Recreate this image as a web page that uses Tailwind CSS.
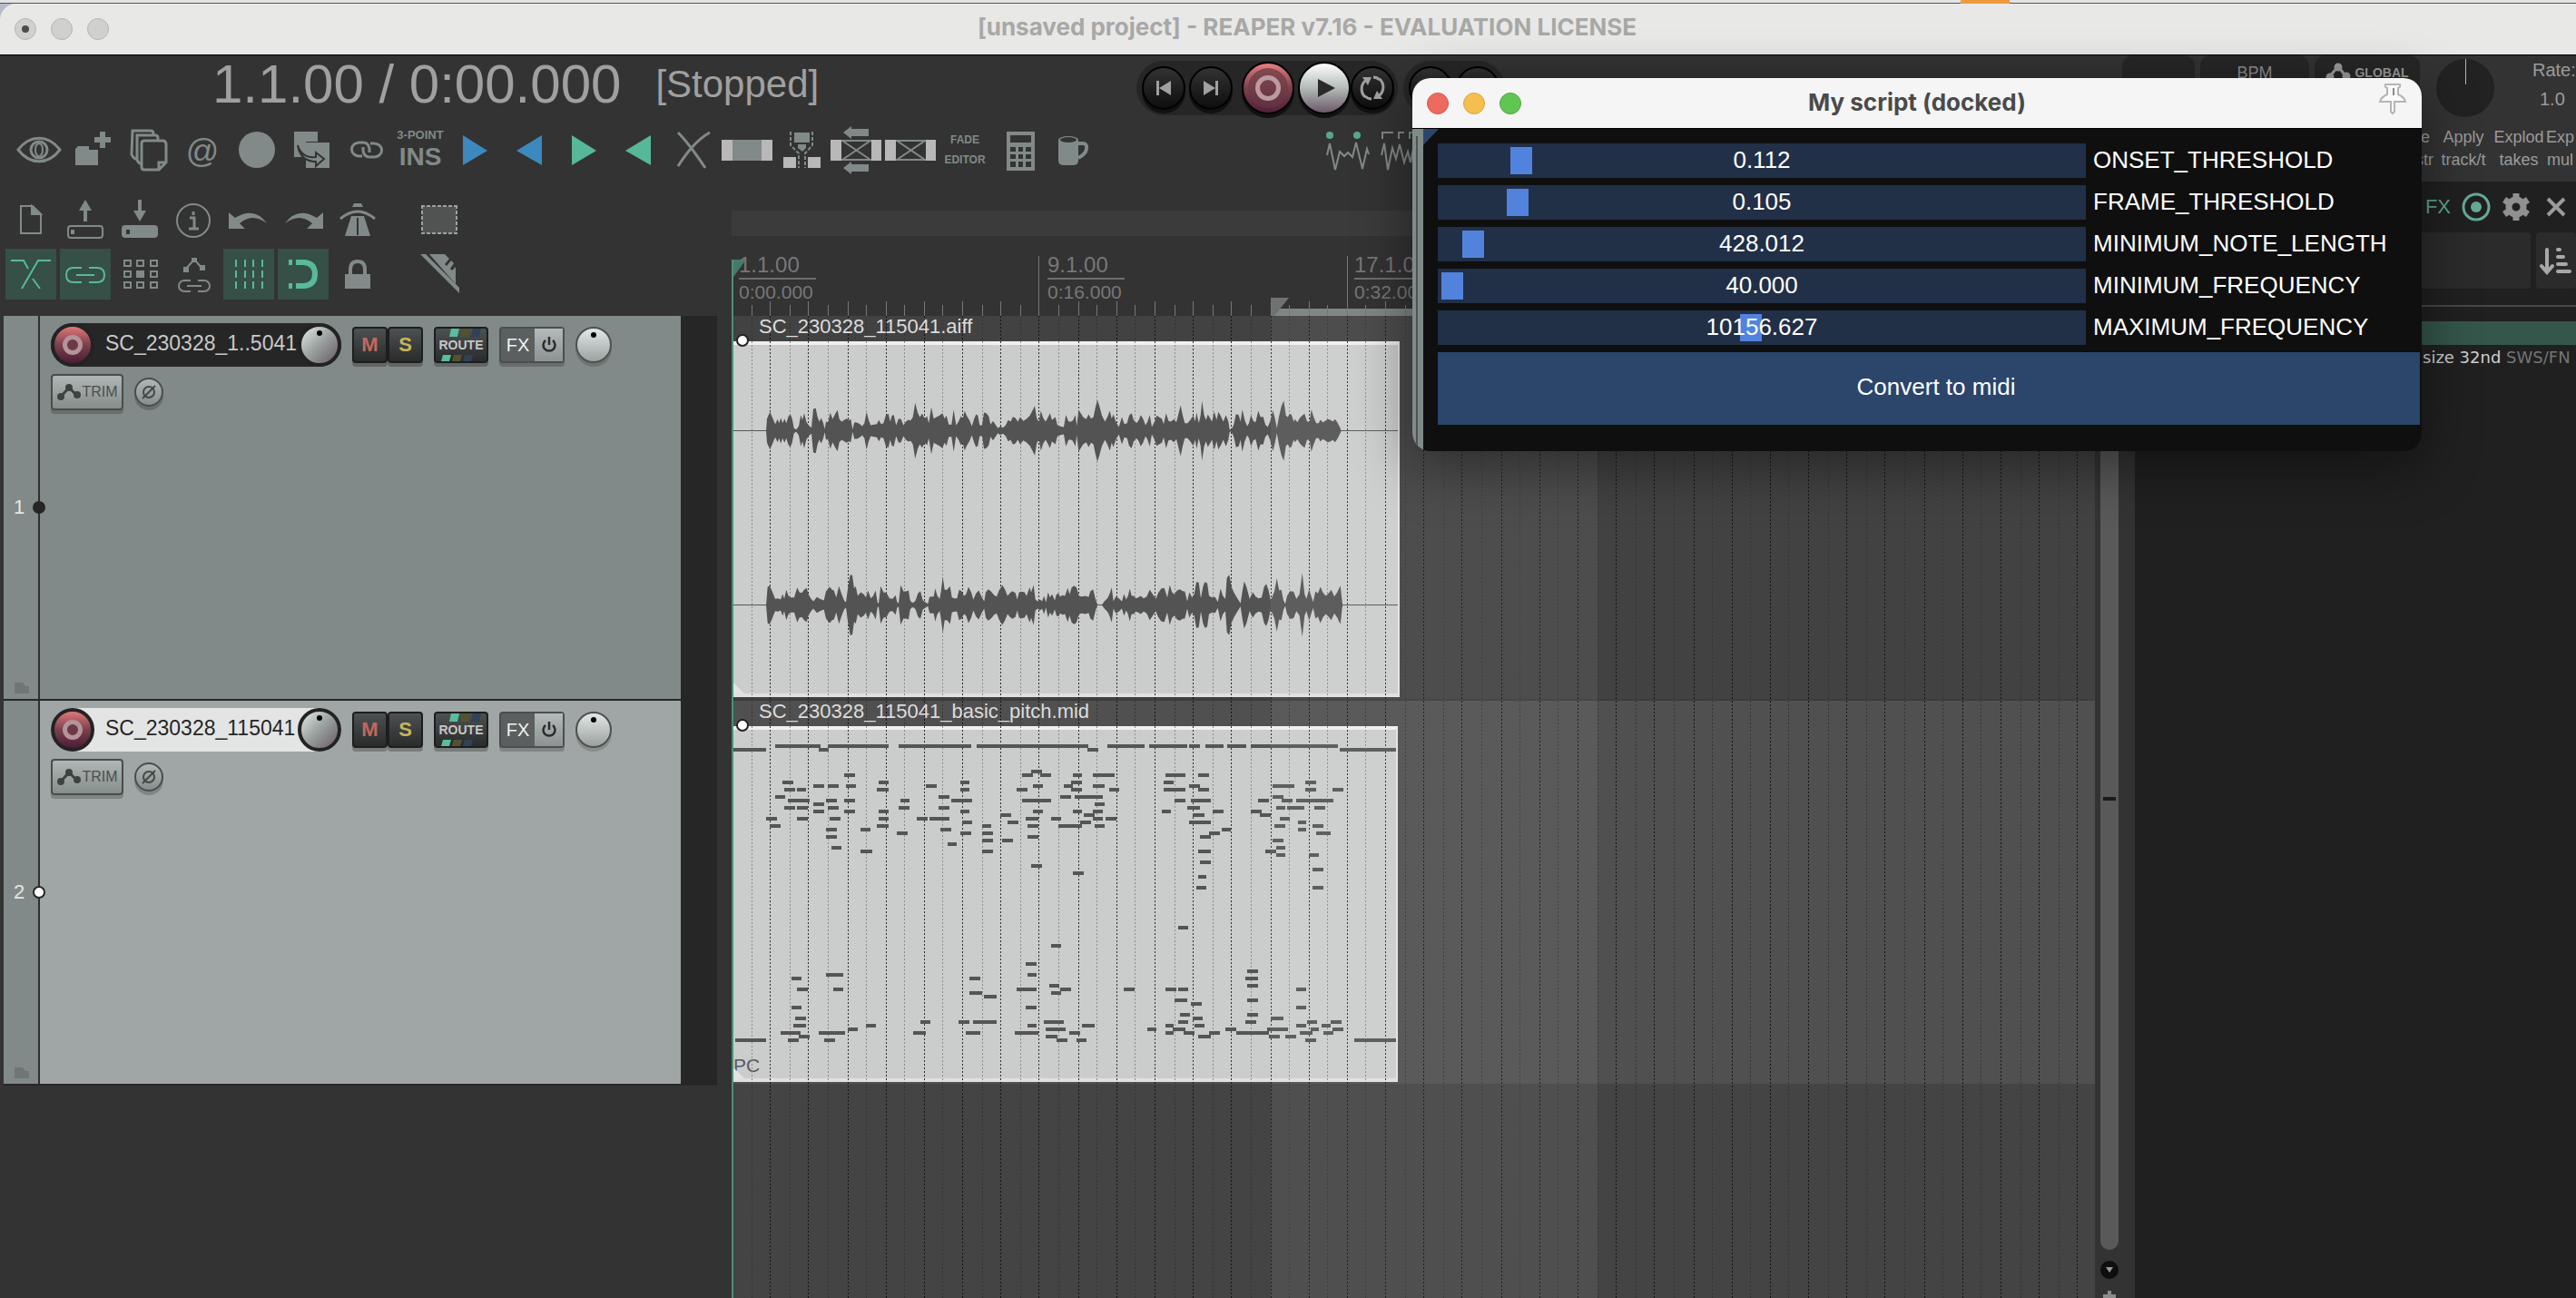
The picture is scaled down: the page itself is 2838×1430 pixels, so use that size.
<!DOCTYPE html>
<html lang="en">
<head>
<meta charset="utf-8">
<title>[unsaved project] - REAPER v7.16 - EVALUATION LICENSE</title>
<script src="https://cdn.jsdelivr.net/npm/@tailwindcss/browser@4"></script>
</head>
<body class="relative flex min-h-screen flex-col overflow-hidden bg-[#333333] font-['Liberation_Sans',sans-serif] text-[#9b9b9b]">

<!-- desktop strip and title bar -->
<div class="flex h-1 justify-end border-b border-[#55565a] bg-[#e3e4e5] pr-[624px]"><div class="h-1 w-[54px] bg-[#ee9a3c]"></div></div>
<header class="bg-[#b4bcc8]">
  <div class="relative flex h-[57px] items-center justify-center rounded-tl-[18px] border-b border-black bg-[#e8e8e6]">
    <div class="absolute left-4 flex gap-4">
      <button aria-label="Close" class="flex size-6 items-center justify-center rounded-full border border-[#b5b5b3] bg-[#d0d0ce]"><span class="size-2 rounded-full bg-[#4c4c4c]"></span></button>
      <button aria-label="Minimise" class="size-6 rounded-full border border-[#b5b5b3] bg-[#d0d0ce]"></button>
      <button aria-label="Zoom" class="size-6 rounded-full border border-[#b5b5b3] bg-[#d0d0ce]"></button>
    </div>
    <h1 class="pb-1 pl-[42px] font-['Inter',sans-serif] text-[26px] font-bold leading-8 text-[#a8a8a6]">[unsaved project] - REAPER v7.16 - EVALUATION LICENSE</h1>
  </div>
</header>

<!-- transport -->
<section class="flex h-[72px] shrink-0 items-center overflow-hidden" aria-label="Transport">
  <div class="flex w-[1252px] shrink-0 items-center pb-2 pl-[234px] text-[#a0a0a0]">
    <span class="text-[60px] leading-[60px]">1.1.00 / 0:00.000</span>
    <span class="ml-[38px] text-[42px] leading-[60px]">[Stopped]</span>
  </div>
  <div class="flex h-[60px] shrink-0 items-center gap-1 rounded-full bg-[#262626] pl-1.5 pr-1">
    <button aria-label="Go to start" class="flex size-12 items-center justify-center rounded-full border-2 border-black bg-linear-to-b from-[#333333] to-[#0e0e0e] shadow-[0_4px_0_#111111]"><svg class="size-6" viewBox="0 0 24 24" fill="#a0a0a0"><path d="M4 4h3v16H4zM20 4v16L7 12z"/></svg></button>
    <button aria-label="Go to end" class="flex size-12 items-center justify-center rounded-full border-2 border-black bg-linear-to-b from-[#333333] to-[#0e0e0e] shadow-[0_4px_0_#111111]"><svg class="size-6" viewBox="0 0 24 24" fill="#a0a0a0"><path d="M17 4h3v16h-3zM4 4v16l13-8z"/></svg></button>
    <button aria-label="Record" class="ml-1.5 flex size-[58px] items-center justify-center rounded-full border-2 border-black bg-linear-to-b from-[#e87f80] via-[#7a414c] to-[#541f3c] shadow-[0_4px_0_#111111]"><span class="flex size-11 items-center justify-center rounded-full bg-linear-to-b from-[#84494f] to-[#5f3140]"><span class="size-7 rounded-full border-[5px] border-[#bd9aa0]"></span></span></button>
    <button aria-label="Play" class="flex size-[58px] items-center justify-center rounded-full border-2 border-black bg-linear-to-b from-white via-[#b2bcb9] to-[#6d5a69] shadow-[0_4px_0_#111111]"><svg class="size-8" viewBox="0 0 32 32" fill="#2a2a2a"><path d="M9 6v20l19-10z"/></svg></button>
    <button aria-label="Repeat" class="-ml-1 flex size-12 items-center justify-center rounded-full border-2 border-black bg-linear-to-b from-[#333333] to-[#0e0e0e] shadow-[0_4px_0_#111111]"><svg class="size-8" viewBox="0 0 32 32" fill="none" stroke="#a0a0a0" stroke-width="3"><path d="M11 6C3 10 2 20 8 26M21 26c8-4 9-14 3-20M17 4q4 0 7 3M15 28q-4 0-7-3"/><path d="M5 4l10 0-4 9zM27 28l-10 0 4-9z" fill="#a0a0a0" stroke="none"/></svg></button>
  </div>
  <div class="ml-1.5 flex h-[60px] shrink-0 items-center gap-1 rounded-full bg-[#262626] px-1.5">
    <button aria-label="Pause" class="size-12 rounded-full border-2 border-black bg-linear-to-b from-[#333333] to-[#0e0e0e]"></button>
    <button aria-label="Stop" class="size-12 rounded-full border-2 border-black bg-linear-to-b from-[#333333] to-[#0e0e0e]"></button>
  </div>
  <div class="ml-auto flex h-full shrink-0 items-start">
    <div class="flex gap-1.5">
      <div class="h-[68px] w-20 rounded-xl bg-[#262626]"></div>
      <div class="h-[68px] w-[120px] rounded-xl bg-[#262626] pt-[7px] text-center text-[18px] leading-6 text-[#8b8b8b]">BPM</div>
      <button class="flex h-[68px] w-[116px] items-start justify-center gap-1 rounded-xl bg-[#262626] pt-[7px] text-[#9a9a9a]">
        <svg class="h-6 w-7" viewBox="0 0 28 24" stroke="#9a9a9a" stroke-width="3" fill="#9a9a9a"><path d="M4 17l10-12 9 12" fill="none"/><circle cx="5" cy="17" r="3"/><circle cx="14" cy="6" r="3"/><circle cx="23" cy="16" r="3"/></svg>
        <span class="text-[14px] font-bold leading-6">GLOBAL</span>
      </button>
    </div>
    <div class="ml-[18px] mt-1 flex size-16 justify-center rounded-full bg-[#222222]"><div class="h-7 w-px bg-[#b5b5b5]"></div></div>
    <div class="ml-[42px] w-12 text-[20px] leading-8"><div>Rate:</div><div class="pl-2">1.0</div></div>
  </div>
</section>

<!-- floating toolbar row -->
<section class="flex h-[67px] shrink-0 overflow-hidden pl-[15px] pt-1" aria-label="Main toolbar">
  <div class="flex gap-1 text-[#818a88] [&_button]:flex [&_button]:size-14 [&_button]:shrink-0 [&_button]:flex-col [&_button]:items-center [&_button]:justify-center [&_svg]:size-14 [&_svg]:shrink-0">
    <button aria-label="Show"><svg viewBox="0 0 56 56" fill="none" stroke="currentColor" stroke-width="3"><path d="M5 28C18 11 38 11 51 28C38 45 18 45 5 28z"/><circle cx="28" cy="28" r="9"/><ellipse cx="28" cy="28" rx="4" ry="7" stroke-width="2"/></svg></button>
    <button aria-label="New track"><svg viewBox="0 0 56 56" fill="currentColor"><path d="M11 24h12v4h10v17H8V27zM35 8h6v6h6v6h-6v6h-6v-6h-6v-6h6z"/></svg></button>
    <button aria-label="Duplicate"><svg viewBox="0 0 56 56" fill="#333333" stroke="currentColor" stroke-width="3"><path d="M11 7h20q3 0 3 3v28H14q-3-2-4-5z"/><path d="M16 12h20q3 0 3 3v28H19q-3-2-3-5z"/><path d="M24 18h20q4 0 4 4v20l-8 8H24q-3 0-3-3V21q0-3 3-3zM40 50v-8h8"/></svg></button>
    <button aria-label="At" class="text-[36px] leading-9"><span class="pt-1">@</span></button>
    <button aria-label="Dot"><svg viewBox="0 0 56 56" fill="currentColor"><circle cx="28" cy="28" r="20"/></svg></button>
    <button aria-label="Copy to"><svg viewBox="0 0 56 56" fill="currentColor"><path d="M9 8h26v11H22v17H9z"/><path d="M22 20h26v28H22z"/><path d="M13 23c3 10 10 14 20 13v-5l9 7-9 8v-5c-12 0-18-6-20-18z" stroke="#333333" stroke-width="2"/></svg></button>
    <button aria-label="Chain"><svg viewBox="0 0 56 56" fill="none" stroke="currentColor" stroke-width="3"><path d="M24 35h-3a8 7 0 0 1 0-15h4q6 0 7 7v4"/><path d="M33 21h4a8 7 0 0 1 0 15h-5q-6 0-7-7v-4"/></svg></button>
    <button class="font-bold"><span class="whitespace-nowrap text-[13px] leading-4">3-POINT</span><span class="text-[28px] leading-8">INS</span></button>
    <button aria-label="Next"><svg viewBox="0 0 56 56" fill="#3d88bd"><path d="M15 12v33l27-16z"/></svg></button>
    <button aria-label="Previous"><svg viewBox="0 0 56 56" fill="#3d88bd"><path d="M42 12v33L14 29z"/></svg></button>
    <button aria-label="Next marker"><svg viewBox="0 0 56 56" fill="#56b898"><path d="M15 12v33l27-16z"/></svg></button>
    <button aria-label="Previous marker"><svg viewBox="0 0 56 56" fill="#56b898"><path d="M42 12v33L14 29z"/></svg></button>
    <button aria-label="Crossfade"><svg viewBox="0 0 56 56" fill="none" stroke="currentColor" stroke-width="3"><path d="M12 9q12 12 30 39M47 9Q30 18 12 46"/></svg></button>
    <button aria-label="Item fade"><svg viewBox="0 0 56 56"><path d="M0 17h56v23H0z" fill="#818a88"/><path d="M0 17h12v23H0zM44 17h12v23H44z" fill="#b8b8b8"/></svg></button>
    <button aria-label="Split"><svg viewBox="0 0 56 56"><path d="M20 9h17v11H20zM24 22h9v4l-4 4-5-4z" fill="#818a88"/><path d="M16 8v15l9 9v16M40 8v15l-8 9v16" fill="none" stroke="#818a88" stroke-width="2" stroke-dasharray="4 2"/><path d="M8 36h14v12H8zM35 36h14v12H35z" fill="#b8b8b8"/></svg></button>
    <button aria-label="Move crossfade left"><svg viewBox="0 0 56 56"><path d="M0 17h12v23H0zM45 17h11v23H45z" fill="#b8b8b8"/><path d="M12 18h33M12 39h33M13 18l31 21M44 18L13 39" stroke="#818a88" stroke-width="2"/><path d="M14 9l9-7v3h19v8H23v3zM14 48l9-7v3h19v8H23v3z" fill="#818a88"/></svg></button>
    <button aria-label="Crossfade item"><svg viewBox="0 0 56 56"><path d="M0 17h12v23H0zM45 17h11v23H45z" fill="#b8b8b8"/><path d="M12 18h33M12 39h33M13 18l31 21M44 18L13 39" stroke="#818a88" stroke-width="2"/></svg></button>
    <button class="gap-2 text-[12px] font-bold leading-[14px]"><span>FADE</span><span>EDITOR</span></button>
    <button aria-label="Calculator"><svg viewBox="0 0 56 56"><path d="M14 8h31v43H14z" fill="#818a88"/><path d="M18 12h23v8H18zM18 25h6v5h-6zM27 25h5v5h-5zM35 25h6v5h-6zM18 33h6v5h-6zM27 33h5v5h-5zM35 33h6v5h-6zM18 41h6v6h-6zM27 41h5v6h-5zM35 41h6v6h-6z" fill="#333333"/></svg></button>
    <button aria-label="Mug"><svg viewBox="0 0 56 56" fill="currentColor"><path d="M11 17v23q0 5 6 5h10q6 0 6-5V17z"/><ellipse cx="22" cy="17" rx="11" ry="4"/><ellipse cx="22" cy="17" rx="9" ry="3" fill="#333333"/><path d="M33 21h5q5 0 4 6t-9 10" fill="none" stroke="currentColor" stroke-width="4"/></svg></button>
    <button aria-label="Peaks" class="ml-[240px]"><svg viewBox="0 0 56 56" fill="none" stroke="currentColor" stroke-width="2"><path d="M7 34l3-13 6 29 5-20 5 5 4-4 5 5 4-16 7 29 5-22 2 6"/><circle cx="10" cy="12" r="4" fill="#5aa68d" stroke="none"/><circle cx="40" cy="12" r="4" fill="#5aa68d" stroke="none"/></svg></button>
    <button aria-label="Transients"><svg viewBox="0 0 56 56" fill="none" stroke="currentColor" stroke-width="2"><path d="M7 34l3-13 4 29 5-24 4 12 4-16 5 20 4-12 3 12 4-20 4 20"/><path d="M8 16V9h12M26 16V9h6M38 16V9h6"/></svg></button>
  </div>
  <div class="ml-auto flex shrink-0 text-center text-[18px] leading-[25px]">
    <div class="w-[42px] pt-0.5 text-right"><div class="pr-1">e</div><div>str</div></div>
    <div class="w-[66px] pt-0.5"><div>Apply</div><div>track/t</div></div>
    <div class="w-[56px] pt-0.5"><div>Explod</div><div>takes</div></div>
    <div class="w-[35px] pt-0.5"><div>Exp</div><div>mul</div></div>
  </div>
</section>

<main class="flex flex-1">
  <!-- left: toolbar and track panels -->
  <section class="flex w-[806px] shrink-0 flex-col">
    <div class="flex flex-col gap-1 pl-1.5 pt-3.5 text-[#818a88] [&_button]:size-14 [&_button]:shrink-0 [&_svg]:size-14">
      <div class="flex gap-1">
        <button aria-label="New project"><svg viewBox="0 0 56 56" fill="none" stroke="currentColor" stroke-width="2"><path d="M17 13h13l9 9v21H17z"/><path d="M29 13v9h10z" fill="currentColor"/></svg></button>
        <button aria-label="Open"><svg viewBox="0 0 56 56" fill="none" stroke="currentColor" stroke-width="2"><rect x="9" y="35" width="38" height="13" rx="3"/><path d="M16 39h-4v5h4z" fill="currentColor" stroke="none"/><path d="M28 30V16" stroke-width="4"/><path d="M21 18l7-12 7 12z" fill="currentColor" stroke="none"/></svg></button>
        <button aria-label="Save"><svg viewBox="0 0 56 56" fill="currentColor"><rect x="8" y="34" width="40" height="14" rx="4"/><path d="M17 39h-4v5h4z" fill="#333333"/><path d="M26 6h4v12h5l-7 12-7-12h5z"/></svg></button>
        <button aria-label="Project settings"><svg viewBox="0 0 56 56" fill="none" stroke="currentColor" stroke-width="2"><circle cx="27" cy="29" r="18"/><path d="M23 26h5v12M22 38h11M27 19v4" stroke-width="3"/></svg></button>
        <button aria-label="Undo"><svg viewBox="0 0 56 56" fill="currentColor"><path d="M6 20v18h18l-6-6q14-12 30 0Q34 13 13 26z"/></svg></button>
        <button aria-label="Redo"><svg viewBox="0 0 56 56" fill="currentColor"><path d="M50 20v18H32l6-6q-14-12-30 0Q22 13 43 26z"/></svg></button>
        <button aria-label="Metronome"><svg viewBox="0 0 56 56" fill="currentColor"><path d="M24 10h8l2 4H22z"/><path d="M9 27q19-16 38 0" fill="none" stroke="currentColor" stroke-width="3"/><path d="M21 24h14l7 22H14zM27 26v19h2V26z" fill-rule="evenodd"/></svg></button>
        <button aria-label="Marquee" class="ml-[30px]"><svg viewBox="0 0 56 56"><path d="M9 13h38v30H9z" fill="#505352"/><path d="M8 13h40M8 43h40M9 12v32M47 12v32" stroke="#9aa2a0" stroke-width="2" stroke-dasharray="4 2"/></svg></button>
      </div>
      <div class="flex gap-1">
        <button aria-label="Auto crossfade" class="bg-[#364f47] text-[#58b99b]"><svg viewBox="0 0 56 56" fill="none" stroke="currentColor" stroke-width="2"><path d="M6 13h14l5 9M50 13H36L18 44M30 33l8 11"/></svg></button>
        <button aria-label="Item grouping" class="bg-[#364f47] text-[#58b99b]"><svg viewBox="0 0 56 56" fill="none" stroke="currentColor" stroke-width="2"><path d="M24 21h-9q-8 0-8 8t8 8h9M32 21h9q8 0 8 8t-8 8h-9M18 29h20"/></svg></button>
        <button aria-label="Ripple editing"><svg viewBox="0 0 56 56" fill="none" stroke="currentColor" stroke-width="2"><path d="M11 13h7v6h-7zM25 13h7v6h-7zM40 13h7v6h-7zM11 25h7v6h-7zM40 25h7v6h-7zM11 37h7v6h-7zM25 37h7v6h-7zM40 37h7v6h-7z"/><path d="M24 24h9v8h-9z" fill="currentColor" stroke="none"/></svg></button>
        <button aria-label="Move envelopes"><svg viewBox="0 0 56 56" fill="none" stroke="currentColor" stroke-width="2"><path d="M19 22l7-8h4l7 8"/><path d="M25 10h6v5h-6zM16 20h6v6h-6zM34 18h6v6h-6z" fill="currentColor" stroke="none"/><path d="M24 35h-7a6 6 0 0 0 0 12h7M32 35h7a6 6 0 0 1 0 12h-7M20 41h16"/></svg></button>
        <button aria-label="Grid lines" class="bg-[#364f47] text-[#58b99b]"><svg viewBox="0 0 56 56" fill="none" stroke="currentColor" stroke-width="2"><path d="M14 12v32M24 12v32M33 12v32M43 12v32" stroke-dasharray="8 4"/></svg></button>
        <button aria-label="Snap" class="bg-[#364f47] text-[#58b99b]"><svg viewBox="0 0 56 56" fill="none" stroke="currentColor" stroke-width="6"><path d="M20 15h9q12 1 12 13T29 41h-9M12 15h4M12 41h4"/></svg></button>
        <button aria-label="Locking"><svg viewBox="0 0 56 56" fill="currentColor"><path d="M14 28h28v16H14z"/><path d="M20 29v-6q0-9 8-9t8 9v6" fill="none" stroke="currentColor" stroke-width="4"/></svg></button>
        <button aria-label="Ruler" class="ml-[30px]"><svg viewBox="0 0 56 56" fill="currentColor"><path d="M7 6h6l37 37v6z"/><path d="M17 6h17l5 5-5 6 2 2 5-6 3 3-4 6 2 2 4-4 0 19z"/></svg></button>
      </div>
    </div>
    <div id="tracks" class="ml-1 mt-[18px] w-[786px]"></div>
  </section>

  <!-- arrange view -->
  <section class="relative flex min-w-0 flex-1 flex-col overflow-hidden" aria-label="Arrange view">
    <div class="mt-8 h-7 shrink-0 bg-[#3b3b3b]"></div>
    <div class="relative mt-[22px] h-[66px] shrink-0 text-[#777777]">
      <svg id="ruler" class="absolute inset-0 h-full w-full"></svg>
      <div class="absolute -top-1 left-2 w-[85px]"><div class="border-b-2 border-[#6e6e6e] text-[24px] leading-7">1.1.00</div><div class="pt-0.5 text-[21px] leading-6">0:00.000</div></div>
      <div class="absolute -top-1 left-[348px] w-[85px]"><div class="border-b-2 border-[#6e6e6e] text-[24px] leading-7">9.1.00</div><div class="pt-0.5 text-[21px] leading-6">0:16.000</div></div>
      <div class="absolute -top-1 left-[686px] w-[85px]"><div class="border-b-2 border-[#6e6e6e] text-[24px] leading-7">17.1.00</div><div class="pt-0.5 text-[21px] leading-6">0:32.000</div></div>
    </div>
    <div class="relative flex flex-1 flex-col bg-[#444444]">
      <div class="h-[424px] shrink-0 border-b-2 border-[#3c3c3c] bg-[#424242]">
        <div class="relative z-10 h-7 pl-[30px] text-[22px] leading-6 text-[#dcdcdc]">SC_230328_115041.aiff</div>
        <div class="ml-0.5 h-[392px] w-[734px] border-y-4 border-r-2 border-t-[#eeefee] border-b-[#dfe0df] border-r-[#e2e3e2] bg-[#cbcdcc]"></div>
      </div>
      <div class="h-[424px] shrink-0 border-b-2 border-[#444444] bg-[#505050]">
        <div class="relative z-10 h-7 pl-[30px] text-[22px] leading-6 text-[#dcdcdc]">SC_230328_115041_basic_pitch.mid</div>
        <div class="ml-0.5 flex h-[392px] w-[732px] items-end border-y-4 border-r-2 border-t-[#eeefee] border-b-[#dfe0df] border-r-[#e2e3e2] bg-[#cbcdcc]"><span class="text-[21px] leading-7 text-[#5a5a5a]">PC</span></div>
      </div>
      <svg id="canvas" class="absolute inset-0 h-full w-full"></svg>
      <div class="absolute inset-y-0 left-[594px] w-[360px] bg-white/[0.06]"></div>
    </div>
    <div class="absolute bottom-0 left-0 top-[86px] w-0.5 bg-[#4b8f7c]"></div>
  </section>

  <!-- vertical scroll bar -->
  <div class="flex w-11 shrink-0 flex-col items-center pr-3 pt-[182px]">
    <div class="flex w-5 flex-1 items-center justify-center rounded-full bg-[#595959]"><div class="h-1 w-3.5 bg-[#1a1a1a]"></div></div>
    <button aria-label="Scroll down" class="mt-3 flex size-5 items-center justify-center rounded-full bg-[#0e0e0e]"><svg class="size-2" viewBox="0 0 8 8" fill="#9a9a9a"><path d="M0 1h8L4 7z"/></svg></button>
    <button aria-label="Zoom in" class="mt-3 h-[9px] w-5"><svg class="h-[9px] w-5" viewBox="0 0 20 9" fill="#8c8c8c"><path d="M8 1h4v4h5v4H3V5h5z"/></svg></button>
  </div>

  <!-- action list dock -->
  <aside class="w-[486px] shrink-0 overflow-hidden bg-[#202020]">
    <div class="flex h-14 items-center justify-end gap-3 pr-2.5">
      <button class="text-[22px] leading-6 text-[#5aa68d]">FX</button>
      <button aria-label="Monitor"><svg class="size-8" viewBox="0 0 32 32" fill="none" stroke="#66a998" stroke-width="3"><circle cx="16" cy="16" r="14"/><circle cx="16" cy="16" r="6" fill="#66a998" stroke="none"/></svg></button>
      <button aria-label="Settings"><svg class="size-8" viewBox="0 0 32 32"><circle cx="16" cy="16" r="8" fill="none" stroke="#909090" stroke-width="7"/><path d="M16 1v6M16 25v6M3 8l6 4M23 20l6 4M3 24l6-4M23 12l6-4" stroke="#909090" stroke-width="7"/></svg></button>
      <button aria-label="Close dock" class="ml-1"><svg class="size-6" viewBox="0 0 24 24" stroke="#9a9a9a" stroke-width="4"><path d="M3 3l18 18M21 3L3 21"/></svg></button>
    </div>
    <div class="flex gap-1.5">
      <input aria-label="Filter" class="h-[62px] w-[436px] rounded bg-[#2b2b2b]">
      <button aria-label="Sort" class="flex h-[62px] w-[44px] items-center justify-center rounded bg-[#2b2b2b]"><svg class="h-8 w-9 shrink-0" viewBox="0 0 36 32" fill="none" stroke="#a8a8a8" stroke-width="4" stroke-linecap="round"><path d="M8 4v24M2 22l6 7 6-7M20 4h2M20 12h6M20 20h9M20 28h13"/></svg></button>
    </div>
    <div class="mt-[18px] h-0.5 bg-[#474747]"></div>
    <div class="mt-4 h-[26px] bg-[#35564b]"></div>
    <div class="whitespace-nowrap pl-[317px] pt-0.5 font-['DejaVu_Sans',sans-serif] text-[18px] leading-6 text-[#d0d0d0]">size 32nd <span class="text-[#757575]">SWS/FN</span></div>
  </aside>
</main>

<!-- floating script window -->
<section class="absolute left-[1556px] top-[86px] z-50 w-[1112px] overflow-hidden rounded-[20px] bg-[#0f0f0f] shadow-[0_16px_60px_4px_rgba(0,0,0,0.4)]" aria-label="My script">
  <div class="relative flex h-14 items-center justify-center border-b border-black bg-[#f5f5f5]">
    <div class="absolute left-4 flex gap-4">
      <button aria-label="Close" class="size-6 rounded-full border border-[#d9564c] bg-[#ec6a5e]"></button>
      <button aria-label="Minimise" class="size-6 rounded-full border border-[#dba33d] bg-[#f4bf4f]"></button>
      <button aria-label="Zoom" class="size-6 rounded-full border border-[#50a73f] bg-[#61c554]"></button>
    </div>
    <h2 class="pb-0.5 font-['Inter',sans-serif] text-[26px] font-bold leading-8 text-[#4a4a4a]">My script (docked)</h2>
    <button aria-label="Pin" class="absolute right-4 top-1"><svg class="h-9 w-8" viewBox="0 0 32 36" fill="#fafafa" stroke="#b5b5b5" stroke-width="2"><path d="M8 3h16q1 3-2 4v7q7 3 8 8H18v11l-2 2-2-2V22H2q1-5 8-8V7Q7 6 8 3z"/><path d="M17 7v8" stroke="#8a8a8a"/></svg></button>
  </div>
  <div class="flex h-[355px]">
    <div class="flex w-3 shrink-0 bg-[#808a89] pl-1 pt-2"><div class="w-0.5 bg-[#4d5453]"></div></div>
    <form class="relative flex-1 pl-4 pr-0.5 pt-4" onsubmit="return false">
      <svg class="absolute left-0 top-0 size-[18px]" viewBox="0 0 18 18" fill="#2b456b"><path d="M0 0h17L0 18z"/></svg>
      <div id="sliders" class="flex flex-col gap-2 text-[26px] leading-9 text-white"></div>
      <button class="mt-2 block h-20 w-full bg-[#2b456b] pb-1 pl-4 text-[26px] leading-8 text-white">Convert to midi</button>
    </form>
  </div>
</section>

<script>
// script parameters: label, shown value, slider position in thousandths
document.getElementById('sliders').innerHTML = [
  ['ONSET_THRESHOLD', '0.112', 112],
  ['FRAME_THRESHOLD', '0.105', 105],
  ['MINIMUM_NOTE_LENGTH', '428.012', 34],
  ['MINIMUM_FREQUENCY', '40.000', 0],
  ['MAXIMUM_FREQUENCY', '10156.627', 482]
].map(([name, value, pos]) => `
  <div class="flex h-[38px]">
    <div class="relative w-[714px] text-center">
      <input id="${name}" type="range" min="0" max="1000" value="${pos}" class="absolute inset-0 m-0 h-[38px] w-full appearance-none bg-[#212f47] px-1 [&::-webkit-slider-thumb]:h-[30px] [&::-webkit-slider-thumb]:w-6 [&::-webkit-slider-thumb]:appearance-none [&::-webkit-slider-thumb]:bg-[#5283dc]">
      <output for="${name}" class="pointer-events-none relative">${value}</output>
    </div>
    <label for="${name}" class="pl-2">${name}</label>
  </div>`).join('');

// track control panels
document.getElementById('tracks').innerHTML = [
  { n: 1, name: 'SC_230328_1..5041', panel: 'bg-[#818a88]', pill: 'bg-[#262626] text-[#c9c9c9]', dot: 'bg-[#262626]' },
  { n: 2, name: 'SC_230328_115041', panel: 'bg-[#a0a6a5]', pill: 'bg-[#e3e5e4] text-[#262626]', dot: 'bg-white' }
].map(t => `
  <div class="flex h-[424px] border-b-2 border-[#262727]">
    <div class="relative flex w-10 shrink-0 flex-col items-center justify-center border-r-2 border-[#2d2e2e] bg-[#818a88]">
      <span class="pr-1 text-[22px] leading-6 text-[#e5e5e5]">${t.n}</span>
      <span class="absolute -right-2 size-3.5 rounded-full border-2 border-[#262626] ${t.dot}"></span>
      <svg class="absolute bottom-1.5 left-3 h-3 w-4" viewBox="0 0 16 12" fill="#6f7675"><path d="M0 0h9l3 4h4v8H0z"/></svg>
    </div>
    <div class="flex-1 pl-3 pt-2 ${t.panel}">
      <div class="flex h-12 items-center gap-3">
        <div class="flex h-12 w-80 items-center rounded-full ${t.pill}">
          <button aria-label="Record arm" class="flex size-12 shrink-0 items-center justify-center rounded-full border-4 border-[#232323] bg-linear-to-b from-[#e0787a] via-[#7a414c] to-[#4b1d36]"><span class="size-[22px] rounded-full border-[5px] border-[#b6929a] bg-[#6b3a46]"></span></button>
          <span class="w-[224px] overflow-visible whitespace-nowrap pb-1 pl-3 text-[23px] leading-7">${t.name}</span>
          <button aria-label="Volume" class="relative size-12 shrink-0 rounded-full border-4 border-[#232323] bg-linear-to-br from-[#e4ece9] via-[#98a09e] to-[#6b5b68]"><span class="absolute left-[17px] top-1 size-1.5 rounded-full bg-black"></span></button>
        </div>
        <div class="flex text-[22px] font-bold leading-6">
          <button class="h-10 w-[39px] rounded-sm border-2 border-[#1d1e1e] bg-linear-to-b from-[#4d5151] to-[#2a2c2c] text-[#c4675f] shadow-[0_4px_0_rgba(0,0,0,0.25)]">M</button>
          <button class="h-10 w-[39px] rounded-sm border-2 border-[#1d1e1e] bg-linear-to-b from-[#4d5151] to-[#2a2c2c] text-[#c5b45c] shadow-[0_4px_0_rgba(0,0,0,0.25)]">S</button>
        </div>
        <button class="relative flex h-10 w-[60px] items-center justify-center rounded-sm border-2 border-[#1d1e1e] bg-linear-to-b from-[#4d5151] to-[#2a2c2c] text-[#c4c6c5] shadow-[0_4px_0_rgba(0,0,0,0.25)]">
          <svg class="absolute inset-0 h-9 w-14" viewBox="0 0 56 36"><path d="M17 0h9l-2 9h-9zM8 29h9l-2 7H6z" fill="#57bd9d"/><path d="M29 0h9l-2 9h-9zM20 29h9l-2 7h-9z" fill="#55532f"/><path d="M41 0h9l-2 9h-9zM32 29h9l-2 7h-9z" fill="#2f4257"/></svg>
          <span class="relative text-[14px] font-bold leading-4">ROUTE</span>
        </button>
        <div class="flex h-10 w-[72px] rounded-sm border-2 border-[#4a4e4e] bg-[#5b5f5f] shadow-[0_4px_0_rgba(0,0,0,0.2)]">
          <button class="w-[37px] text-[20px] leading-6 text-[#f2f2f2]">FX</button>
          <button aria-label="FX bypass" class="flex flex-1 items-center justify-center bg-linear-to-b from-[#b4baba] to-[#8d9392]"><svg class="size-5" viewBox="0 0 20 20" fill="none" stroke="#2c2c2c" stroke-width="2.5"><path d="M10 1v9M6 5a6.500 6.500 0 1 0 8 0"/></svg></button>
        </div>
        <button aria-label="Pan" class="relative size-10 rounded-full border-2 border-[#4c5050] bg-linear-to-b from-[#e3e8e7] to-[#9aa2a0] shadow-[0_4px_0_rgba(0,0,0,0.15)]"><span class="absolute left-[15px] top-1 size-1.5 rounded-full bg-black"></span></button>
      </div>
      <div class="mt-2 flex h-10 items-center gap-3">
        <button class="flex h-10 w-20 items-center justify-center rounded-sm border-2 border-[#484d4c] bg-linear-to-b from-[#b0b6b5] to-[#868e8c] text-[#4a4f4e] shadow-[0_4px_0_rgba(0,0,0,0.2)]">
          <svg class="h-5 w-7" viewBox="0 0 28 20" fill="#3e4342" stroke="#3e4342" stroke-width="3"><path d="M5 15l9-10 8 8" fill="none"/><circle cx="5" cy="15" r="2.500"/><circle cx="14" cy="5" r="2.500"/><circle cx="23" cy="13" r="2.500"/></svg>
          <span class="text-[16px] leading-5">TRIM</span>
        </button>
        <button aria-label="Phase" class="flex size-8 items-center justify-center rounded-full border-2 border-[#484d4c] bg-linear-to-b from-[#b0b6b5] to-[#868e8c] shadow-[0_4px_0_rgba(0,0,0,0.2)]"><svg class="size-5" viewBox="0 0 20 20" fill="none" stroke="#444948" stroke-width="2"><circle cx="10" cy="10" r="6"/><path d="M3 17L17 3"/></svg></button>
      </div>
    </div>
    <div class="w-10 shrink-0 bg-[#262626]"></div>
  </div>`).join('');

// beat positions, snapped to even pixels; every second line is a bar
const beats = Array.from({ length: 120 }, (_, k) => ({ k, x: 2 * Math.round(21.18 * k / 2) })).slice(1);
const ticks = beats.map(b => `<path d="M${b.x}.5 ${b.k % 16 === 0 ? 0 : b.k % 2 ? 54 : 50}V66"/>`).join('');
document.getElementById('ruler').innerHTML =
  `<path d="M594 58h360v8H594z" fill="#7f8785"/><path d="M594 46h20l-16 20h-4z" fill="#6f7271"/>` +
  `<g stroke="#777777">${ticks}</g>` +
  `<path d="M0 4h16L0 26z" fill="#44796b"/>`;

const line = (b, y1, y2, c) => `<path d="M${b.x}.5 ${y1}V${y2}" stroke="${c}" stroke-dasharray="2 2"/>`;
let out = beats.map(b => {
  const odd = b.k % 2, lane = odd ? '#353535' : '#141414', item = odd ? '#8b8b8b' : '#2e2e2e';
  return b.x < 732
    ? line(b, 0, 28, lane) + line(b, 28, 420, item) + line(b, 420, 452, lane) + line(b, 452, 844, item) + line(b, 844, 2000, lane)
    : line(b, 0, 2000, lane);
}).join('');

// waveform envelopes: x and amplitude, in thirds of a pixel
const left1 = '12,0 15,40 25,62 35,38 42,22 50,38 55,25 61,42 67,25 73,40 79,25 85,45 92,55 98,40 104,8 112,4 120,15 127,52 132,35 138,58 145,30 152,18 162,10 168,72 176,74 182,45 188,30 194,42 200,28 206,5 210,30 217,28 224,60 232,38 240,55 248,68 254,38 262,30 270,35 278,40 286,35 292,38 298,4 304,28 314,26 322,22 330,15 337,25 344,62 351,35 358,18 368,20 378,22 385,35 392,22 400,25 408,52 416,56 422,30 428,50 434,52 442,18 450,40 458,38 466,18 474,30 482,36 490,34 497,45 505,92 513,60 520,45 528,56 536,40 544,48 550,25 558,78 566,40 575,45 585,50 595,58 602,40 608,50 616,20 625,20 632,70 640,18 648,30 656,48 662,40 668,65 676,48 684,35 692,15 700,40 706,54 712,50 718,18 726,18 732,60 740,58 748,48 754,20 762,32 770,20 778,8 786,14 795,10 804,18 812,35 820,30 828,46 836,42 844,30 852,45 862,32 872,38 884,50 892,65 900,82 907,40 914,30 920,66 928,42 936,30 944,45 950,58 957,35';
const right1 = '8,45 15,18 25,14 36,12 43,52 52,30 60,30 66,34 74,52 79,15 85,68 92,58 100,45 110,38 118,54 126,40 134,45 140,75 147,102 154,80 162,50 172,30 180,45 188,66 194,40 200,54 208,30 218,12 228,45 236,22 245,25 252,50 260,58 267,35 276,25 284,35 290,52 298,40 306,18 313,30 320,52 327,12 336,30 343,50 352,44 360,40 366,22 374,58 382,32 390,30 400,38 408,28 415,55 422,84 429,50 436,25 445,25 454,35 464,50 470,30 475,60 482,25 488,50 493,98 500,50 506,35 512,54 519,42 526,30 533,64 541,35 547,62 555,48 563,30 572,52 580,30 584,4 590,4 598,20 605,55 614,52 620,30 626,70 634,35 642,15 648,25 655,52 662,32 670,28 679,66 686,45 695,46 702,20 710,12 718,30 727,68 734,40 740,8 748,50 755,80 763,100 770,50 776,45 782,55 788,54 796,30 800,38 808,28 816,42 824,50 832,56 840,30 848,30 854,70 862,45 870,25 878,25 884,36 892,28 900,32 908,38 918,35 925,30 932,38 940,28 948,12 953,0';
const left2 = '12,0 17,60 24,64 32,45 42,20 52,22 60,18 67,36 72,20 79,50 86,30 94,25 105,25 115,58 122,42 130,40 138,50 146,56 152,35 160,22 168,12 180,26 190,20 203,15 210,45 222,60 230,50 236,48 244,25 253,62 262,35 270,15 276,8 283,60 290,100 297,98 303,55 308,62 315,30 325,42 335,35 342,25 349,48 358,22 366,30 374,48 380,8 384,5 391,62 400,42 410,40 420,22 430,20 440,32 445,10 450,5 457,66 466,45 475,45 483,48 488,15 494,8 500,8 506,15 514,38 522,46 530,15 540,8 547,4 552,26 560,28 566,28 571,55 578,30 586,20 590,45 596,94 602,50 610,50 620,62 626,25 635,22 643,22 650,50 658,46 666,30 673,35 681,60 690,42 697,18 706,38 715,48 724,28 733,12 738,42 746,52 756,44 766,32 774,28 782,48 793,66 802,50 810,30 818,40 826,46 836,40 842,18 848,42 856,44 866,42 873,30 883,58 888,42 896,66 902,18 910,12 918,18 924,12 931,30 937,8 944,42 950,25 957,35';
const right2 = '0,30 6,15 12,35 18,38 24,28 32,32 40,30 49,56 55,35 62,58 70,64 78,58 86,30 95,28 108,30 118,26 124,45 133,52 140,22 147,1 162,1 170,12 180,22 187,35 194,58 200,12 208,28 218,22 228,12 235,36 242,18 248,30 254,54 260,30 267,30 274,22 282,25 290,30 300,22 310,28 320,50 330,35 340,20 348,40 358,54 368,56 378,25 386,66 394,42 402,35 410,48 420,52 428,46 436,45 444,12 451,42 460,25 467,35 474,76 482,74 489,22 496,60 502,76 510,72 516,30 526,25 536,26 545,10 554,54 562,30 570,20 575,90 583,100 590,60 598,42 606,28 614,15 620,5 626,45 632,78 640,60 650,20 661,42 670,28 680,22 690,25 698,60 705,70 712,52 720,15 726,30 732,45 740,88 748,48 755,50 762,15 768,4 774,30 784,46 795,44 805,20 815,35 824,106 832,35 838,20 847,52 855,25 860,10 868,45 876,38 884,60 893,40 902,30 912,40 920,50 930,28 940,42 950,64 956,10 958,0';
const wave = (a, b, base) => {
  const parse = (s, o) => s.split(' ').map(p => p.split(',').map(Number)).map(([x, v]) => [34 + (x + o) / 3, v / 3]);
  const pts = parse(a, 0).concat(parse(b, 960));
  const up = pts.map(([x, v]) => `${x.toFixed(1)} ${(base - v).toFixed(1)}`);
  const down = pts.slice().reverse().map(([x, v]) => `${x.toFixed(1)} ${(base + v).toFixed(1)}`);
  return `<path d="M2 ${base}H734" stroke="#555555"/><path d="M${up.concat(down).join('L')}z" fill="#535353"/>`;
};
out += wave(left1, right1, 126.5) + wave(left2, right2, 318.5);
out += '<path d="M2 404l12 12H2zM2 828l12 12H2z" fill="#e2e3e2"/>';

// MIDI notes by row
const notes = {
  186: '111-214 231-370 392-556 569-824 867-952 961-1047 1052-1076 1089-1130 1139-1183 1193-1390',
  198: '17-90 210-234 821-845 1395-1523', 270: '693-717',
  282: '269-293 673-697 714-738 788-809 834-883 999-1043 1073-1097',
  306: '128-152 347-370 532-552 784-808 994-1018 1316-1340',
  318: '198-222 231-255 272-296 454-478 697-721 767-788 834-861 1052-1076 1242-1291',
  330: '132-156 161-181 342-370 532-552 660-684 784-808 871-894 994-1043 1073-1097 1316-1340 1378-1402',
  354: '111-135 483-507 759-783 792-857 1242-1266',
  366: '140-189 227-251 269-293 396-416 512-560 673-738 1019-1043 1056-1101 1209-1233 1263-1287 1296-1381',
  378: '198-222 838-861', 390: '132-156 161-185 231-255 392-416 483-507 1048-1076 1250-1270 1275-1315 1337-1361',
  402: '198-222 269-293 347-370 532-552 697-721 788-808 834-857 990-1010 1106-1130 1193-1217',
  414: '623-647 813-837 1060-1088 1213-1238',
  426: '91-115 161-185 235-259 347-370 433-457 462-507 681-709 739-762 834-857 863-887 1259-1282',
  438: '536-560 640-664 805-829 1052-1101 1300-1319',
  450: '99-123 342-370 582-602 685-709 755-808 838-861 1246-1270 1333-1357',
  462: '227-251 305-329 487-511 1126-1147 1300-1319', 474: '388-412 532-556 582-606 1098-1122 1341-1373',
  486: '227-251 685-709 1077-1101', 498: '582-606 627-651 1242-1266', 510: '503-523', 522: '239-263 1250-1270',
  534: '305-333 582-606 1073-1101 1226-1250', 546: '1250-1270 1325-1348', 570: '1077-1101', 582: '693-717',
  594: '1333-1357', 606: '788-812', 618: '1073-1092', 654: '1069-1092 1333-1357', 786: '1027-1051', 846: '739-762',
  906: '681-705', 930: '1184-1208', 942: '227-267 685-705', 954: '149-172 553-577 1180-1208', 978: '734-758 1184-1208',
  990: '161-185 243-267 660-705 759-783 904-928 999-1023 1027-1051 1296-1319', 1002: '553-581 739-762', 1014: '586-614',
  1026: '1019-1047 1184-1208', 1038: '1056-1080', 1050: '149-172 681-705 1296-1319', 1074: '1031-1055 1184-1208',
  1086: '157-181 1060-1084 1238-1266', 1098: '442-465 528-552 561-614 722-767 1027-1051 1180-1204 1320-1344 1374-1398',
  1110: '153-181 318-341 685-705 809-837 999-1018 1064-1088 1296-1319 1353-1373',
  1122: '276-300 726-771 957-977 1015-1043 1135-1159 1230-1278 1329-1348 1378-1402',
  1134: '124-169 210-271 425-453 545-577 656-709 780-804 999-1018 1040-1064 1098-1122 1159-1233 1304-1332 1358-1381',
  1146: '165-189 726-754 1073-1101 1234-1258 1271-1295', 1158: '21-90 140-165 223-247 751-775 796-820 1316-1340 1428-1523'
};
for (const [row, spans] of Object.entries(notes)) {
  for (const s of spans.split(' ')) {
    const [a, b] = s.split('-').map(v => Math.round(v / 2.063) - 6);
    out += `<rect x="${a}" y="${410 + row / 3}" width="${b - a}" height="4" fill="#555555"/>`;
  }
}
out += '<circle cx="12" cy="27" r="6" fill="#fff" stroke="#222222" stroke-width="2"/><circle cx="12" cy="451" r="6" fill="#fff" stroke="#222222" stroke-width="2"/>';
document.getElementById('canvas').innerHTML = out;
</script>
</body>
</html>
